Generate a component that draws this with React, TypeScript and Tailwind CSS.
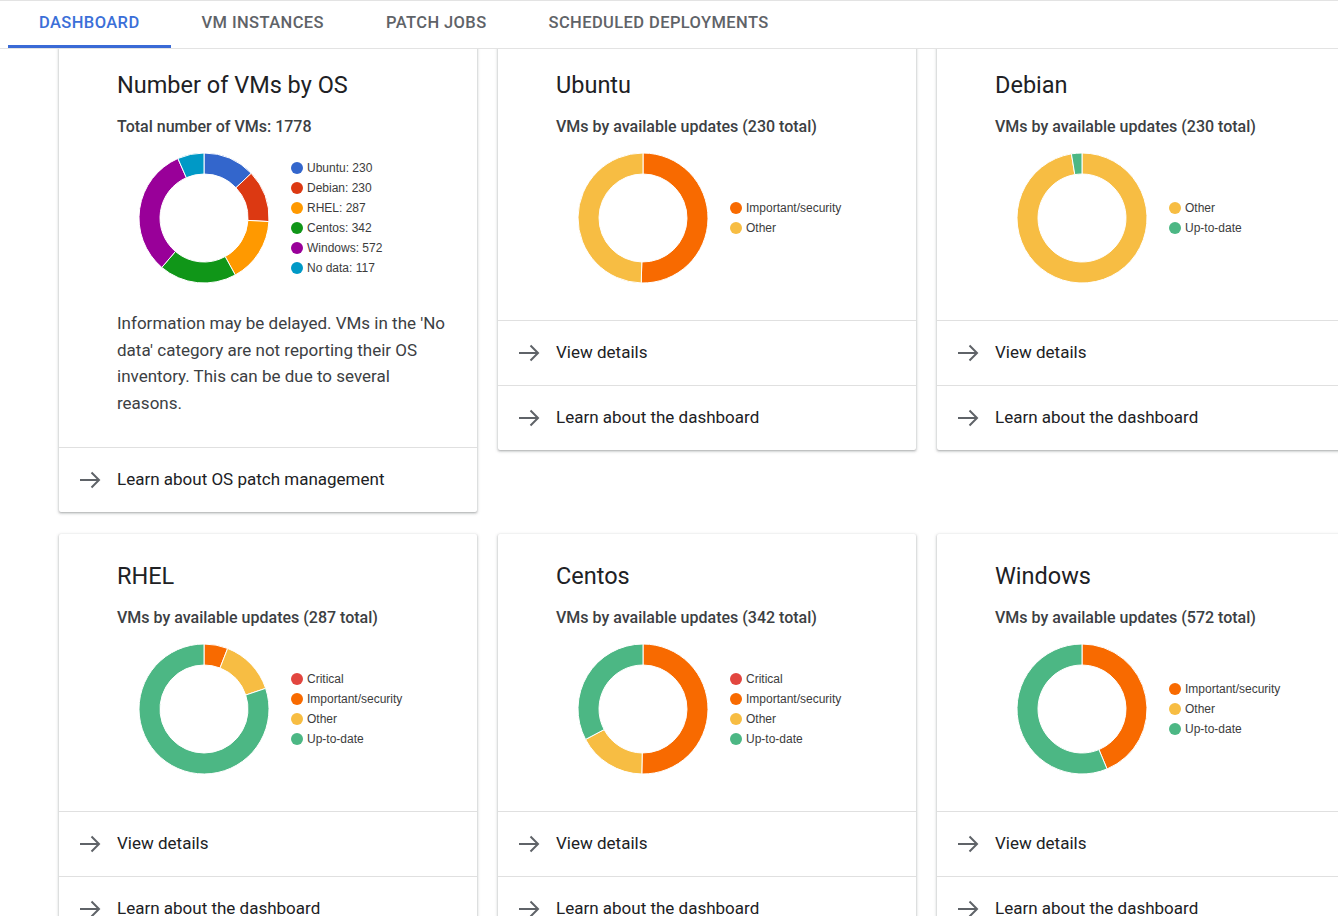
import React from 'react';

type Slice = { label: string; value: number; color: string };

const C = {
  critical: '#e2463f',
  important: '#f86a00',
  other: '#f7bd43',
  upToDate: '#4cb784',
};

const tabs = ['DASHBOARD', 'VM INSTANCES', 'PATCH JOBS', 'SCHEDULED DEPLOYMENTS'];

// polar -> cartesian, 0deg at twelve o'clock going clockwise
const pt = (cx: number, cy: number, r: number, deg: number) => {
  const a = ((deg - 90) * Math.PI) / 180;
  return [cx + r * Math.cos(a), cy + r * Math.sin(a)];
};

function arcPath(a0: number, a1: number, R: number, r: number, c: number) {
  const large = a1 - a0 > 180 ? 1 : 0;
  const [x0, y0] = pt(c, c, R, a0);
  const [x1, y1] = pt(c, c, R, a1);
  const [x2, y2] = pt(c, c, r, a1);
  const [x3, y3] = pt(c, c, r, a0);
  return `M${x0} ${y0} A${R} ${R} 0 ${large} 1 ${x1} ${y1} L${x2} ${y2} A${r} ${r} 0 ${large} 0 ${x3} ${y3} Z`;
}

function Donut({ slices }: { slices: Slice[] }) {
  const total = slices.reduce((s, x) => s + x.value, 0);
  const size = 132;
  const c = size / 2;
  let angle = 0;
  return (
    <svg width={size} height={size} viewBox={`0 0 ${size} ${size}`} className="shrink-0">
      {slices
        .filter((s) => s.value > 0)
        .map((s) => {
          const sweep = (s.value / total) * 360;
          const a0 = angle;
          angle += sweep;
          if (sweep >= 359.99) {
            return (
              <circle key={s.label} cx={c} cy={c} r={54.5} fill="none" stroke={s.color} strokeWidth={21} />
            );
          }
          return (
            <path
              key={s.label}
              d={arcPath(a0, a0 + sweep, 65, 44, c)}
              fill={s.color}
              stroke="#ffffff"
              strokeWidth={1}
            />
          );
        })}
    </svg>
  );
}

function Arrow() {
  return (
    <svg width="22" height="18" viewBox="0 0 22 18" className="shrink-0">
      <path d="M1 9h19M12.5 1.5L20 9l-7.5 7.5" fill="none" stroke="#5f6368" strokeWidth="2" />
    </svg>
  );
}

interface CardProps {
  title: string;
  subtitle: string;
  slices: Slice[];
  note?: string;
  links: string[];
}

function Card({ title, subtitle, slices, note, links }: CardProps) {
  return (
    <div className="bg-white rounded-[2px] shadow-[0_1px_2px_0_rgba(60,64,67,0.3),0_1px_3px_1px_rgba(60,64,67,0.15)]">
      <div className={`pl-[58px] pr-6 pt-7 ${note ? 'pb-[30px]' : 'pb-[36px]'}`}>
        <h2 className="text-[23.5px] leading-7 text-[#202124]">{title}</h2>
        <p className="mt-[18px] text-[16px] leading-5 font-medium text-[#3c4043]">{subtitle}</p>
        <div className="mt-[15px] flex items-center pl-[21px]">
          <Donut slices={slices} />
          <ul className="ml-[21px] font-['Liberation_Sans',Arial,sans-serif] text-[12px] text-[#3c3c3c]">
            {slices.map((s) => (
              <li key={s.label} className="flex items-center h-5">
                <span className="w-3 h-3 rounded-full mr-1" style={{ backgroundColor: s.color }} />
                {s.label}
              </li>
            ))}
          </ul>
        </div>
        {note && <p className="mt-[26px] text-[17px] leading-[26.67px] text-[#3c4043]">{note}</p>}
      </div>
      {links.map((l) => (
        <a key={l} className="flex items-center h-[65px] border-t border-[#e0e0e0] pl-5 text-[17px] text-[#202124]">
          <Arrow />
          <span className="ml-4">{l}</span>
        </a>
      ))}
    </div>
  );
}

const updates = (critical: number | null, important: number, other: number | null, upToDate: number | null) => {
  const out: Slice[] = [];
  if (critical !== null) out.push({ label: 'Critical', value: critical, color: C.critical });
  out.push({ label: 'Important/security', value: important, color: C.important });
  if (other !== null) out.push({ label: 'Other', value: other, color: C.other });
  if (upToDate !== null) out.push({ label: 'Up-to-date', value: upToDate, color: C.upToDate });
  return out;
};

const dashLinks = ['View details', 'Learn about the dashboard'];

export default function App() {
  return (
    <div className="w-full h-screen overflow-hidden bg-white font-['Roboto',sans-serif]">
      <div className="relative z-10 bg-white h-[49px] border-t border-b border-[#e3e3e3] flex pl-[8px]">
        {tabs.map((t, i) => (
          <div
            key={t}
            className={`h-full flex items-center px-[31px] pb-[3px] text-[16.5px] font-medium tracking-[0.4px] ${
              i === 0 ? 'text-[#3b6fd8] shadow-[inset_0_-3px_0_#3a6ad6]' : 'text-[#5f6368]'
            }`}
          >
            {t}
          </div>
        ))}
      </div>

      <div className="-mt-1.5 pl-[59px] grid grid-cols-[418px_418px_418px] gap-x-[21px] gap-y-[22px] items-start">
        <Card
          title="Number of VMs by OS"
          subtitle="Total number of VMs: 1778"
          slices={[
            { label: 'Ubuntu: 230', value: 230, color: '#3366cc' },
            { label: 'Debian: 230', value: 230, color: '#dc3912' },
            { label: 'RHEL: 287', value: 287, color: '#ff9900' },
            { label: 'Centos: 342', value: 342, color: '#109618' },
            { label: 'Windows: 572', value: 572, color: '#990099' },
            { label: 'No data: 117', value: 117, color: '#0099c6' },
          ]}
          note="Information may be delayed. VMs in the 'No data' category are not reporting their OS inventory. This can be due to several reasons."
          links={['Learn about OS patch management']}
        />
        <Card
          title="Ubuntu"
          subtitle="VMs by available updates (230 total)"
          slices={[
            { label: 'Important/security', value: 116, color: C.important },
            { label: 'Other', value: 114, color: C.other },
          ]}
          links={dashLinks}
        />
        <Card
          title="Debian"
          subtitle="VMs by available updates (230 total)"
          slices={[
            { label: 'Other', value: 224, color: C.other },
            { label: 'Up-to-date', value: 6, color: C.upToDate },
          ]}
          links={dashLinks}
        />
        <Card
          title="RHEL"
          subtitle="VMs by available updates (287 total)"
          slices={updates(0, 17, 40, 230)}
          links={dashLinks}
        />
        <Card
          title="Centos"
          subtitle="VMs by available updates (342 total)"
          slices={updates(0, 172, 58, 112)}
          links={dashLinks}
        />
        <Card
          title="Windows"
          subtitle="VMs by available updates (572 total)"
          slices={updates(null, 250, 0, 322)}
          links={dashLinks}
        />
      </div>
    </div>
  );
}
